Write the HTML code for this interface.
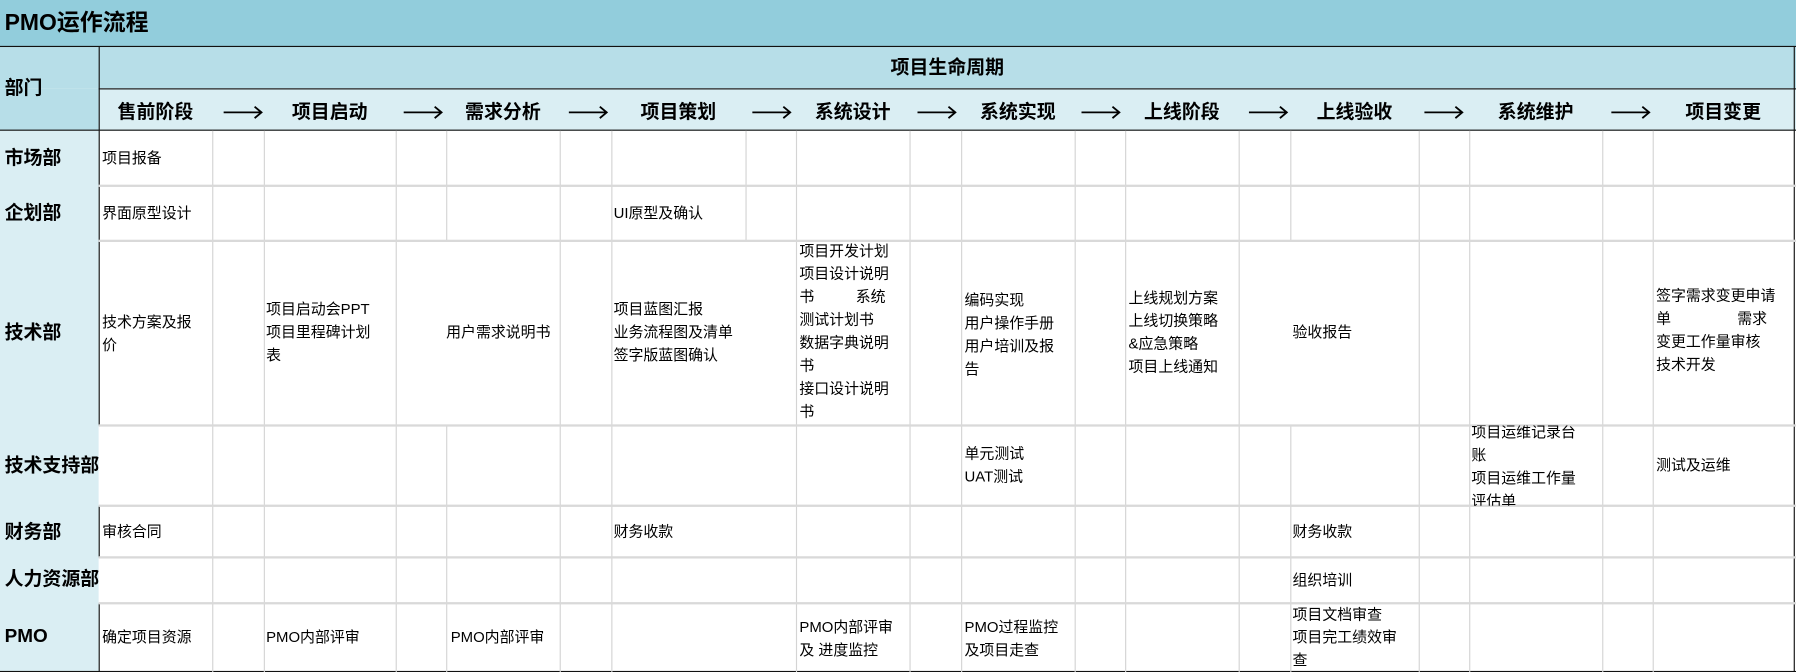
<!DOCTYPE html>
<html><head><meta charset="utf-8">
<style>
html,body{margin:0;padding:0;width:1796px;height:672px;overflow:hidden;background:#fff}
#w{position:absolute;left:0;top:0;width:1566px;height:586px;transform:scale(1.14687);transform-origin:0 0;font-family:"Liberation Sans","Noto Sans CJK SC",sans-serif;color:#000}
.a{position:absolute}
.t{position:absolute;font-size:13px;line-height:20px;white-space:nowrap}
.b{position:absolute;font-size:16.5px;font-weight:bold;line-height:20px;white-space:nowrap}
.v{position:absolute;width:1px;background:#d4d4d4}
.h{position:absolute;height:2px;background:#d9d9d9;left:86px;width:1480px}
.s{position:absolute;font-size:16.5px;font-weight:bold;line-height:20px;top:88px;text-align:center;white-space:nowrap}
</style></head><body><div id="w">
<div class="a" style="left:0;top:0;width:1566px;height:41px;background:#92CDDC"></div>
<div class="a" style="left:0;top:41px;width:1566px;height:36px;background:#B7DEE8"></div>
<div class="a" style="left:86px;top:77px;width:1480px;height:37px;background:#DAEEF3"></div>
<div class="a" style="left:0;top:77px;width:86px;height:37px;background:#B7DEE8"></div>
<div class="a" style="left:0;top:114px;width:86px;height:472px;background:#DAEEF3"></div>
<div class="a" style="left:0;top:40px;width:1566px;height:1px;background:#111"></div>
<div class="a" style="left:86px;top:77px;width:1480px;height:1px;background:#111"></div>
<div class="a" style="left:0;top:113px;width:1566px;height:1px;background:#111"></div>
<div class="a" style="left:0;top:585px;width:1566px;height:1px;background:#111"></div>
<div class="a" style="left:86px;top:41px;width:1px;height:73px;background:#111"></div>
<div class="a" style="left:1564px;top:41px;width:1px;height:545px;background:#111"></div>
<!-- dark left border segments -->
<div class="a" style="left:86px;top:114px;width:1px;height:257px;background:#111"></div>
<div class="a" style="left:86px;top:441px;width:1px;height:45px;background:#111"></div>
<div class="a" style="left:86px;top:526px;width:1px;height:60px;background:#111"></div>

<!-- vertical grid lines -->
<div class="v" style="left:185px;top:114px;height:472px"></div>
<div class="v" style="left:230px;top:114px;height:472px"></div>
<div class="v" style="left:345px;top:114px;height:472px"></div>
<div class="v" style="left:389px;top:114px;height:96px"></div>
<div class="v" style="left:389px;top:371px;height:215px"></div>
<div class="v" style="left:488px;top:114px;height:472px"></div>
<div class="v" style="left:533px;top:114px;height:472px"></div>
<div class="v" style="left:650px;top:114px;height:96px"></div>
<div class="v" style="left:694px;top:114px;height:472px"></div>
<div class="v" style="left:793px;top:114px;height:472px"></div>
<div class="v" style="left:838px;top:114px;height:472px"></div>
<div class="v" style="left:937px;top:114px;height:472px"></div>
<div class="v" style="left:981px;top:114px;height:472px"></div>
<div class="v" style="left:1080px;top:114px;height:472px"></div>
<div class="v" style="left:1125px;top:114px;height:96px"></div>
<div class="v" style="left:1125px;top:371px;height:215px"></div>
<div class="v" style="left:1237px;top:114px;height:472px"></div>
<div class="v" style="left:1281px;top:114px;height:472px"></div>
<div class="v" style="left:1397px;top:114px;height:472px"></div>
<div class="v" style="left:1441px;top:114px;height:472px"></div>
<!-- row separators -->
<div class="h" style="top:161px"></div>
<div class="h" style="top:209px"></div>
<div class="h" style="top:370px"></div>
<div class="h" style="top:440px"></div>
<div class="h" style="top:485px"></div>
<div class="h" style="top:525px"></div>

<div class="a" style="left:4px;top:8px;font-size:20px;font-weight:bold;line-height:24px">PMO运作流程</div>
<div class="b" style="left:4px;top:67px">部门</div>
<div class="b" style="left:86px;top:49px;width:1480px;text-align:center">项目生命周期</div>

<div class="s" style="left:86px;width:99px">售前阶段</div>
<div class="s" style="left:230px;width:115px">项目启动</div>
<div class="s" style="left:389px;width:99px">需求分析</div>
<div class="s" style="left:533px;width:117px">项目策划</div>
<div class="s" style="left:694px;width:99px">系统设计</div>
<div class="s" style="left:838px;width:99px">系统实现</div>
<div class="s" style="left:981px;width:99px">上线阶段</div>
<div class="s" style="left:1125px;width:112px">上线验收</div>
<div class="s" style="left:1281px;width:116px">系统维护</div>
<div class="s" style="left:1441px;width:123px">项目变更</div>
<svg class="a" style="left:0;top:88px" width="1566" height="20">
<g stroke="#000" stroke-width="1.6" fill="none">
<path d="M195 10h33M222 5l6 5-6 5"/>
<path d="M352 10h33M379 5l6 5-6 5"/>
<path d="M496 10h33M523 5l6 5-6 5"/>
<path d="M656 10h33M683 5l6 5-6 5"/>
<path d="M800 10h33M827 5l6 5-6 5"/>
<path d="M943 10h33M970 5l6 5-6 5"/>
<path d="M1089 10h33M1116 5l6 5-6 5"/>
<path d="M1242 10h33M1269 5l6 5-6 5"/>
<path d="M1405 10h33M1432 5l6 5-6 5"/>
</g></svg>

<div class="b" style="left:4px;top:128px">市场部</div>
<div class="b" style="left:4px;top:176px">企划部</div>
<div class="b" style="left:4px;top:280px">技术部</div>
<div class="b" style="left:4px;top:396px">技术支持部</div>
<div class="b" style="left:4px;top:454px">财务部</div>
<div class="b" style="left:4px;top:495px">人力资源部</div>
<div class="b" style="left:4px;top:545px">PMO</div>

<div class="t" style="left:89px;top:128px">项目报备</div>
<div class="t" style="left:89px;top:176px">界面原型设计</div>
<div class="t" style="left:535px;top:176px">UI原型及确认</div>

<div class="t" style="left:89px;top:271px">技术方案及报<br>价</div>
<div class="t" style="left:232px;top:260px">项目启动会PPT<br>项目里程碑计划<br>表</div>
<div class="t" style="left:389px;top:280px">用户需求说明书</div>
<div class="t" style="left:535px;top:260px">项目蓝图汇报<br>业务流程图及清单<br>签字版蓝图确认</div>
<div class="t" style="left:697px;top:209px">项目开发计划<br>项目设计说明<br>书&nbsp;&nbsp;&nbsp;&nbsp;&nbsp;&nbsp;&nbsp;&nbsp;&nbsp;&nbsp;系统<br>测试计划书<br>数据字典说明<br>书<br>接口设计说明<br>书</div>
<div class="t" style="left:841px;top:252px">编码实现<br>用户操作手册<br>用户培训及报<br>告</div>
<div class="t" style="left:984px;top:250px">上线规划方案<br>上线切换策略<br>&amp;应急策略<br>项目上线通知</div>
<div class="t" style="left:1127px;top:280px">验收报告</div>
<div class="t" style="left:1444px;top:248px">签字需求变更申请<br>单&nbsp;&nbsp;&nbsp;&nbsp;&nbsp;&nbsp;&nbsp;&nbsp;&nbsp;&nbsp;&nbsp;&nbsp;&nbsp;&nbsp;&nbsp;&nbsp;需求<br>变更工作量审核<br>技术开发</div>

<div class="t" style="left:841px;top:386px">单元测试<br>UAT测试</div>
<div class="a" style="left:1281px;top:371px;width:116px;height:70px;overflow:hidden"><div class="t" style="left:2px;top:-4px;line-height:20px">项目运维记录台<br>账<br>项目运维工作量<br>评估单</div></div>
<div class="t" style="left:1444px;top:396px">测试及运维</div>

<div class="t" style="left:89px;top:454px">审核合同</div>
<div class="t" style="left:535px;top:454px">财务收款</div>
<div class="t" style="left:1127px;top:454px">财务收款</div>
<div class="t" style="left:1127px;top:496px">组织培训</div>

<div class="t" style="left:89px;top:546px">确定项目资源</div>
<div class="t" style="left:232px;top:546px">PMO内部评审</div>
<div class="t" style="left:393px;top:546px">PMO内部评审</div>
<div class="t" style="left:697px;top:537px">PMO内部评审<br>及 进度监控</div>
<div class="t" style="left:841px;top:537px">PMO过程监控<br>及项目走查</div>
<div class="t" style="left:1127px;top:526px">项目文档审查<br>项目完工绩效审<br>查</div>
</div></body></html>
